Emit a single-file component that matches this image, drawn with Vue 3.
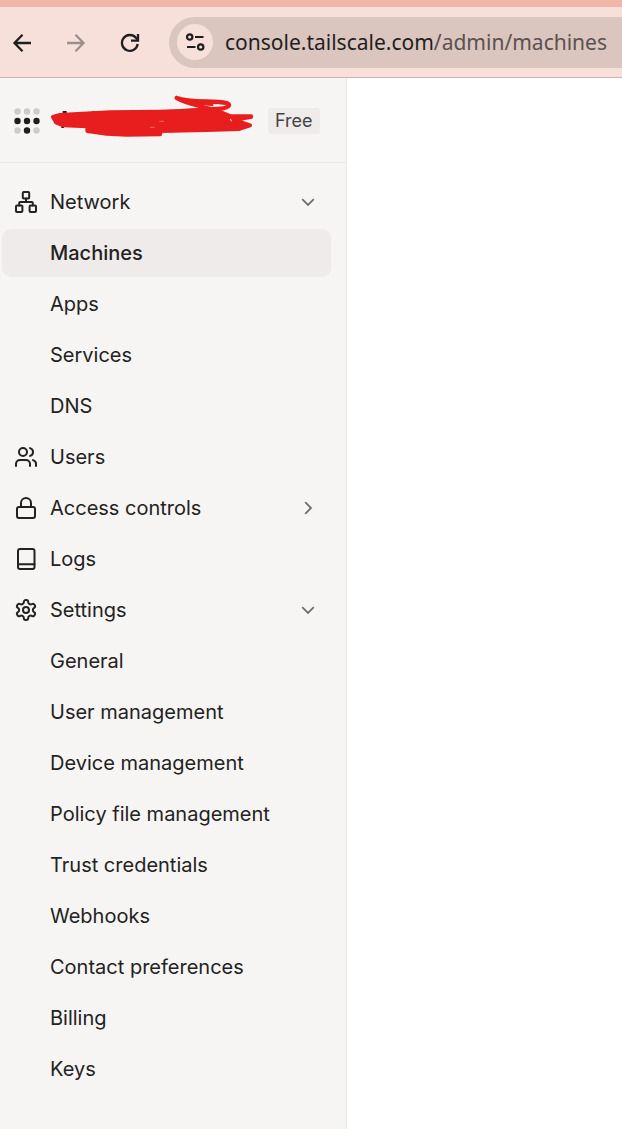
<template>
  <div class="window">
    <header class="browser-bar">
      <button type="button" class="bar-btn" aria-label="Back">
        <svg width="20" height="20" viewBox="0 0 20 20" fill="none" stroke="currentColor" stroke-width="2.3">
          <path d="M19 10H3M10.500 1.800L2.500 10l8 8.200" />
        </svg>
      </button>
      <button type="button" class="bar-btn forward" aria-label="Forward" disabled>
        <svg width="20" height="20" viewBox="0 0 20 20" fill="none" stroke="currentColor" stroke-width="2.3">
          <path d="M1 10h16M9.500 1.800l8 8.200-8 8.200" />
        </svg>
      </button>
      <button type="button" class="bar-btn" aria-label="Reload">
        <svg width="20" height="20" viewBox="0 0 20 20" fill="none" stroke="currentColor" stroke-width="2.3">
          <path d="M17.700 11a7.900 7.900 0 1 1-1.800-6.200L18 7" />
          <path d="M18 1v6.700h-7" />
        </svg>
      </button>
      <div class="address">
        <button type="button" class="site-info" aria-label="View site information">
          <svg width="20" height="20" viewBox="0 0 20 20" fill="none" stroke="currentColor" stroke-width="2.2">
            <circle cx="4.700" cy="5" r="2.700" />
            <path d="M10 5h8.500M2 15h8.500" />
            <circle cx="15.700" cy="15" r="2.700" />
          </svg>
        </button>
        <a class="url" href="#machines">console.tailscale.com<span>/admin/machines</span></a>
      </div>
    </header>

    <div class="page">
      <aside class="sidebar">
        <div class="account">
          <svg class="logo" width="26" height="26" viewBox="0 0 26 26" aria-hidden="true">
            <circle
              v-for="dot in dots"
              :key="dot.id"
              :cx="dot.x"
              :cy="dot.y"
              r="3.2"
              :fill="dot.lit ? '#1f1e1e' : '#cdcbc9'"
            />
          </svg>
          <svg class="scribble" width="204" height="52" viewBox="153 30 612 156" aria-hidden="true">
            <path d="M188 81h12M184 126h8M276 82h8" stroke="#1f1e1e" stroke-width="6" />
            <path
              d="M159 96L180 90L330 82L480 80L600 76L660 85L692 96L753 96L700 104L750 121L716 132L620 135L482 138L480 148L380 149L320 146L262 138L262 124L190 121L168 112Z"
              fill="#e81e1e"
              stroke="#e81e1e"
              stroke-width="12"
              stroke-linejoin="round"
            />
            <path
              d="M530 39C570 54 640 46 680 54C696 60 684 70 650 72C610 76 570 76 540 80M530 39C560 58 610 64 650 77L690 94H753"
              fill="none"
              stroke="#e81e1e"
              stroke-width="13"
              stroke-linecap="round"
              stroke-linejoin="round"
            />
            <path d="M540 42L640 52L640 64L570 56Z" fill="#e81e1e" />
            <path d="M478 109h14M450 127h14" stroke="#f29a98" stroke-width="2" />
            <path d="M691 102l4 7" stroke="#f6f5f3" stroke-width="3" />
          </svg>
          <span class="plan">Free</span>
        </div>

        <nav class="menu" aria-label="Admin console">
          <template v-for="section in sections" :key="section.label">
            <button
              v-if="section.children"
              type="button"
              class="item"
              :aria-expanded="section.open"
              @click="section.open = !section.open"
            >
              <svg class="icon" viewBox="0 0 24 24" v-html="icons[section.icon]"></svg>
              <span class="label">{{ section.label }}</span>
              <svg class="chevron" :class="{ closed: !section.open }" viewBox="0 0 14 14">
                <path d="M1.200 4.200L7 10l5.800-5.800" />
              </svg>
            </button>
            <a v-else class="item" :href="'#' + section.icon">
              <svg class="icon" viewBox="0 0 24 24" v-html="icons[section.icon]"></svg>
              <span class="label">{{ section.label }}</span>
            </a>
            <template v-if="section.open">
              <a
                v-for="child in section.children"
                :key="child"
                href="#machines"
                class="item child"
                :class="{ active: child === current }"
                :aria-current="child === current ? 'page' : undefined"
                @click.prevent="current = child"
              >{{ child }}</a>
            </template>
          </template>
        </nav>
      </aside>
      <main class="content"></main>
    </div>
  </div>
</template>

<script setup>
import { ref } from 'vue'

const current = ref('Machines')

// Middle row and bottom center dots are dark, the rest are grey
const dots = Array.from({ length: 9 }, (_, i) => ({
  id: i,
  x: 3.5 + (i % 3) * 9.5,
  y: 3.5 + Math.floor(i / 3) * 9.5,
  lit: [3, 4, 5, 7].includes(i)
}))

const sections = ref([
  { label: 'Network', icon: 'network', open: true, children: ['Machines', 'Apps', 'Services', 'DNS'] },
  { label: 'Users', icon: 'users' },
  { label: 'Access controls', icon: 'lock', open: false, children: [] },
  { label: 'Logs', icon: 'book' },
  {
    label: 'Settings',
    icon: 'settings',
    open: true,
    children: [
      'General',
      'User management',
      'Device management',
      'Policy file management',
      'Trust credentials',
      'Webhooks',
      'Contact preferences',
      'Billing',
      'Keys'
    ]
  }
])

const icons = {
  network:
    '<rect x="8.800" y="2" width="6.400" height="6.400" rx="1"/><rect x="2" y="15.600" width="6.400" height="6.400" rx="1"/><rect x="15.600" y="15.600" width="6.400" height="6.400" rx="1"/><path d="M5.200 15.600V13a1 1 0 0 1 1-1h11.600a1 1 0 0 1 1 1v2.600M12 12V8.400"/>',
  users:
    '<path d="M16 21v-2a4 4 0 0 0-4-4H6a4 4 0 0 0-4 4v2"/><circle cx="9" cy="7" r="4"/><path d="M22 21v-2a4 4 0 0 0-3-3.870M16 3.130a4 4 0 0 1 0 7.750"/>',
  lock: '<rect x="3" y="11" width="18" height="11" rx="2"/><path d="M7 11V7a5 5 0 0 1 10 0v4"/>',
  book: '<rect x="4" y="2" width="16.500" height="20" rx="2"/><path d="M4 17.200h16.500"/>',
  settings:
    '<path d="M12.220 2h-.44a2 2 0 0 0-2 2v.18a2 2 0 0 1-1 1.73l-.43.25a2 2 0 0 1-2 0l-.15-.08a2 2 0 0 0-2.73.73l-.22.38a2 2 0 0 0 .73 2.73l.15.1a2 2 0 0 1 1 1.72v.51a2 2 0 0 1-1 1.74l-.15.09a2 2 0 0 0-.73 2.73l.22.38a2 2 0 0 0 2.73.73l.15-.08a2 2 0 0 1 2 0l.43.25a2 2 0 0 1 1 1.73V20a2 2 0 0 0 2 2h.44a2 2 0 0 0 2-2v-.18a2 2 0 0 1 1-1.73l.43-.25a2 2 0 0 1 2 0l.15.08a2 2 0 0 0 2.73-.73l.22-.39a2 2 0 0 0-.73-2.73l-.15-.08a2 2 0 0 1-1-1.74v-.5a2 2 0 0 1 1-1.74l.15-.09a2 2 0 0 0 .73-2.73l-.22-.38a2 2 0 0 0-2.73-.73l-.15.08a2 2 0 0 1-2 0l-.43-.25a2 2 0 0 1-1-1.73V4a2 2 0 0 0-2-2z"/><circle cx="12" cy="12" r="3"/>'
}
</script>

<style>
body {
  margin: 0;
}
</style>

<style scoped>
.window {
  display: flex;
  flex-direction: column;
  min-height: 100vh;
  background: #ffffff;
  font-family: Inter, sans-serif;
  color: #232222;
}

button {
  margin: 0;
  border: 0;
  background: none;
  font: inherit;
  color: inherit;
  cursor: pointer;
}

a {
  color: inherit;
  text-decoration: none;
}

.browser-bar {
  display: flex;
  align-items: center;
  padding: 10px 0 9px 12px;
  border-top: 7px solid #f0b6aa;
  border-bottom: 1px solid #cfb1ab;
  background: #f7e0da;
}

.bar-btn {
  display: flex;
  flex: none;
  margin-right: 34px;
  padding: 0;
  color: #1f1f1f;
}

.bar-btn.forward {
  color: #9d8e8b;
}

.address {
  display: flex;
  flex: 1;
  min-width: 0;
  align-items: center;
  gap: 12px;
  margin-left: -5px;
  padding: 7px 0 8px 8px;
  border-radius: 26px 0 0 26px;
  background: #dac5bf;
}

.site-info {
  display: flex;
  flex: none;
  align-items: center;
  justify-content: center;
  width: 36px;
  height: 36px;
  padding: 0;
  border-radius: 50%;
  background: #f7e0da;
  color: #1f1f1f;
}

.url {
  overflow: hidden;
  font-family: "Noto Sans", sans-serif;
  font-size: 21px;
  line-height: 32px;
  white-space: nowrap;
  color: #1f1f1f;
}

.url span {
  color: #5b514f;
}

.page {
  display: flex;
  flex: 1;
}

.sidebar {
  flex: none;
  width: 346px;
  border-right: 1px solid #ebe9e7;
  background: #f6f5f3;
}

.account {
  display: flex;
  align-items: center;
  padding: 17px 14px 15px;
  border-bottom: 1px solid #ebe9e7;
}

.logo {
  flex: none;
  margin-right: 11px;
}

.scribble {
  flex: none;
  margin-right: 13px;
}

.plan {
  padding: 0 7px;
  border-radius: 3px;
  background: #efebea;
  font-size: 18px;
  line-height: 26px;
  color: #454342;
}

.menu {
  display: flex;
  flex-direction: column;
  gap: 3px;
  padding: 15px 15px 36px 2px;
}

.item {
  display: flex;
  align-items: center;
  height: 48px;
  padding: 0 16px 0 12px;
  border-radius: 9px;
  font-size: 20px;
  line-height: 30px;
  text-align: left;
}

.item.child {
  padding-left: 48px;
}

.item.active {
  background: #efebea;
  font-weight: 500;
}

.icon {
  flex: none;
  width: 24px;
  height: 24px;
  margin-right: 12px;
  fill: none;
  stroke: #232222;
  stroke-width: 2;
  stroke-linecap: round;
  stroke-linejoin: round;
}

.label {
  flex: 1;
}

.chevron {
  flex: none;
  width: 14px;
  height: 14px;
  fill: none;
  stroke: #706e6d;
  stroke-width: 1.8;
}

.chevron.closed {
  transform: rotate(-90deg);
}

.content {
  flex: 1;
  background: #ffffff;
}
</style>
